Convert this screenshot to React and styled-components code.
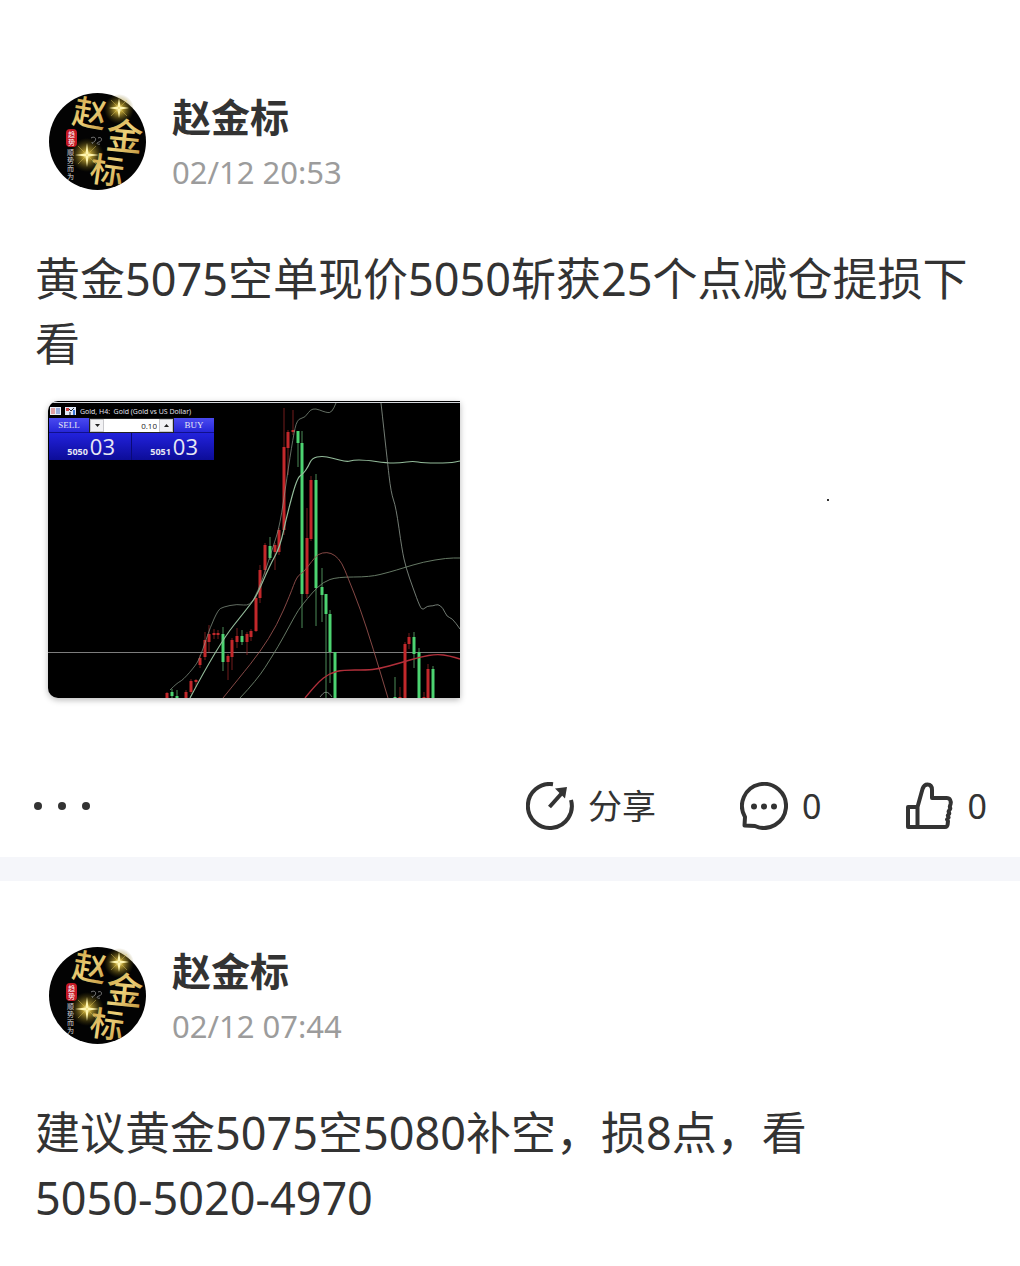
import React from 'react'
import styled, { createGlobalStyle } from 'styled-components';

const GlobalStyle = createGlobalStyle`
  * {
    box-sizing: border-box;
  }
  body {
    margin: 0;
    background: #fff;
    color: #333;
    font-family: "Noto Sans", "Noto Sans CJK SC", sans-serif;
  }
  button, input {
    font: inherit;
    color: inherit;
    border: 0;
    padding: 0;
    margin: 0;
    background: none;
  }
`

const Feed = styled.main`
  padding-top: 27px;
`

const Post = styled.article`
  padding: 66px 33px 27px 35px;

  & + & {
    border-top: 24px solid #f5f6fa;
  }
`

const Header = styled.header`
  display: flex;
  gap: 25px;
  padding-left: 14px;
`

const AvatarImage = styled.svg`
  flex: none;
  width: 98px;
  height: 98px;
  overflow: visible;
  font-family: "Noto Sans CJK SC", sans-serif;
`

const Author = styled.h2`
  margin: 0 0 8px;
  font-family: "Noto Sans CJK SC", sans-serif;
  font-size: 39px;
  line-height: 44px;
  font-weight: 700;
`

const PostTime = styled.time`
  display: block;
  font-size: 31px;
  line-height: 54px;
  color: #9c9c9c;
`

const Body = styled.p`
  margin: 47px 0 0;
  font-size: 45px;
  line-height: 65px;
  white-space: pre-line;
`

const Media = styled.div`
  display: flex;
  align-items: center;
  margin: 25px 0 0 13px;
`

const Shot = styled.div`
  position: relative;
  flex: none;
  width: 412px;
  height: 297px;
  overflow: hidden;
  border-radius: 10px 0 0 10px;
  background: #000;
  box-shadow: 0 2px 6px rgba(0, 0, 0, 0.28);
  color: #e8e8f4;
  font-family: "Open Sans", sans-serif;
`

const Speck = styled.span`
  width: 2px;
  height: 2px;
  margin: 0 0 100px 367px;
  background: #333;
`

const ChartCanvas = styled.svg`
  display: block;
  width: 100%;
  height: 100%;
`

const Overlay = styled.div`
  position: absolute;
  top: 3px;
  left: 1px;
  width: 165px;
`

const ChartTitle = styled.div`
  display: flex;
  align-items: center;
  gap: 4px;
  height: 14px;
  padding-left: 1px;
  font-size: 7px;
  white-space: pre;
`

const TradePanel = styled.div`
  display: grid;
  grid-template-columns: 40px minmax(0, 1fr) 40px;
  background: #1717c4;
`

const TradeButton = styled.button`
  height: 15px;
  border-bottom: 1px solid #10108c;
  background: linear-gradient(#4a4af0, #2626d8);
  font-family: "Liberation Serif", serif;
  font-size: 9px;
  line-height: 14px;
`

const Lots = styled.div`
  display: flex;
  height: 15px;
  border: 1px solid #222;
  background: #fff;
  color: #222;
`

const LotsInput = styled.input`
  flex: 1;
  width: 0;
  min-width: 0;
  padding-right: 2px;
  text-align: right;
  font-size: 8px;
  line-height: 13px;
`

const Step = styled.button`
  display: flex;
  align-items: center;
  justify-content: center;
  width: 14px;
  border: 1px solid #c8c8cc;
  background: #f2f2f4;
`

const Quotes = styled.div`
  grid-column: 1 / -1;
  display: grid;
  grid-template-columns: 1fr 1fr;
  gap: 1px;
  background: #0a0a78;
`

const Quote = styled.div`
  display: flex;
  align-items: baseline;
  justify-content: flex-end;
  gap: 2px;
  height: 27px;
  padding-right: 16px;
  background: linear-gradient(#2222dc, #0c0c98);
  font-size: 22px;
  line-height: 26px;

  b {
    font-size: 9px;
  }
`

const Actions = styled.footer`
  display: flex;
  align-items: center;
  gap: 84px;
  margin-top: 84px;
`

const MoreButton = styled.button`
  display: flex;
  gap: 16px;
  margin: 0 auto 0 -1px;
  padding: 8px 0;
`

const Dot = styled.span`
  width: 8px;
  height: 8px;
  border-radius: 50%;
  background: #333;
`

const Action = styled.button`
  display: flex;
  align-items: center;
  gap: 14px;
  height: 48px;
  font-size: 34px;
  line-height: 48px;
`

const Icon = styled.svg`
  width: 48px;
  height: 48px;
  fill: none;
  stroke: #333;
  stroke-width: 4;
  stroke-linejoin: round;
`

const posts = [
  {
    id: 1,
    time: '02/12 20:53',
    text: '黄金5075空单现价5050斩获25个点减仓提损下看',
    chart: true,
  },
  {
    id: 2,
    time: '02/12 07:44',
    text: '建议黄金5075空5080补空，损8点，看\n5050-5020-4970',
  },
]

// [x, open/close top, open/close bottom, high, low]
const up = [
  [119, 292, 297, 291, 297], [138, 291, 297, 289, 297], [143, 280, 291, 278, 293],
  [148, 279, 281, 278, 286], [152, 257, 264, 254, 267], [157, 239, 256, 231, 259],
  [161, 233, 241, 224, 251], [166, 232, 234, 228, 238], [170, 232, 234, 229, 238],
  [180, 255, 261, 253, 279], [184, 239, 256, 237, 269], [189, 235, 241, 227, 247],
  [199, 233, 241, 231, 254], [203, 230, 236, 228, 240], [208, 197, 230, 195, 231],
  [212, 169, 197, 164, 202], [217, 144, 169, 142, 174], [227, 144, 151, 142, 169],
  [231, 129, 151, 127, 154], [236, 46, 129, 7, 134], [240, 31, 47, 29, 74],
  [245, 29, 31, 9, 34], [259, 137, 193, 107, 197], [263, 79, 138, 75, 140],
  [352, 296, 297, 286, 297], [357, 243, 297, 241, 297], [361, 236, 243, 232, 248],
  [376, 296, 297, 291, 297], [380, 268, 297, 263, 297],
]

const down = [
  [124, 291, 295, 288, 297], [129, 295, 297, 289, 297], [175, 233, 261, 226, 270],
  [194, 235, 241, 229, 244], [222, 145, 157, 136, 159], [250, 30, 42, 30, 66],
  [254, 42, 193, 30, 227], [268, 79, 187, 73, 225], [274, 186, 194, 167, 221],
  [278, 193, 213, 193, 297], [282, 213, 251, 209, 282], [287, 251, 297, 251, 297],
  [347, 296, 297, 276, 297], [366, 236, 253, 231, 267], [371, 251, 297, 247, 297],
  [385, 268, 297, 265, 297],
]

const lines = [
  { color: '#8d9c8d', width: 0.7, points: [[122, 289], [129, 282], [135, 279], [148, 264], [152, 256], [157, 242], [162, 227], [170, 209], [175, 206], [189, 203], [202, 205], [210, 190], [218, 168], [225, 146], [232, 124], [239, 76], [245, 37], [249, 18], [257, 17], [264, 6], [279, 12], [284, 11], [288, 2]] },
  { color: '#93bb9a', width: 1.2, points: [[142, 297], [170, 244], [202, 204], [209, 194], [222, 164], [232, 146], [239, 114], [249, 77], [255, 73], [260, 66], [264, 57], [274, 55], [284, 57], [299, 61], [305, 59], [317, 59], [339, 62], [352, 62], [365, 60], [375, 62], [402, 62], [412, 60]] },
  { color: '#8f9a90', width: 0.8, points: [[333, 2], [339, 57], [343, 92], [348, 106], [354, 149], [358, 167], [365, 187], [372, 206], [375, 209], [379, 205], [385, 205], [390, 203], [395, 207], [399, 216], [404, 217], [412, 228]] },
  { color: '#71866f', width: 0.9, points: [[192, 297], [209, 279], [225, 254], [235, 237], [249, 211], [255, 203], [264, 192], [275, 181], [289, 176], [322, 176], [342, 171], [355, 167], [375, 161], [399, 157], [412, 157]] },
  { color: '#94504d', width: 0.9, points: [[175, 297], [192, 276], [212, 251], [229, 224], [242, 194], [249, 175], [255, 172], [264, 160], [270, 153], [279, 151], [287, 154], [294, 162], [300, 177], [312, 207], [325, 247], [340, 297]] },
  { color: '#b02f3a', width: 1.4, points: [[257, 297], [269, 282], [282, 272], [295, 269], [319, 269], [330, 268], [352, 262], [372, 256], [389, 253], [402, 255], [412, 258]] },
  { color: '#8f9a90', width: 0.8, points: [[272, 296], [275, 292], [278, 291], [281, 292], [284, 296]] },
]

// rounds the corners by running a quadratic curve through each midpoint
const smooth = (points) => {
  let d = `M${points[0]}`
  for (let i = 1; i < points.length - 1; i++) {
    const [x, y] = points[i]
    const [nx, ny] = points[i + 1]
    d += ` Q${x} ${y} ${(x + nx) / 2} ${(y + ny) / 2}`
  }
  return `${d} L${points[points.length - 1]}`
}

const Candles = ({ data, color, wick }) => (
  <g>
    {data.map(([x, top, bottom, high, low]) => (
      <g key={x}>
        <path d={`M${x} ${high}V${low}`} stroke={wick} strokeWidth="0.8" />
        <rect x={x - 1.5} y={top} width="3" height={bottom - top} fill={color} />
      </g>
    ))}
  </g>
)

const Chart = () => (
  <Shot>
    <ChartCanvas viewBox="0 0 412 297" role="img" aria-label="Gold H4">
      <path d="M4 1.5H412" stroke="#d5d8dc" strokeWidth="1" />
      <path d="M0 251.5H412" stroke="#7d7d7d" strokeWidth="1" />
      <Candles data={up} color="#c3282b" wick="#8f2424" />
      <Candles data={down} color="#4cd471" wick="#5fae70" />
      {lines.map((line, i) => (
        <path key={i} d={smooth(line.points)} fill="none" stroke={line.color} strokeWidth={line.width} />
      ))}
    </ChartCanvas>
    <Overlay>
      <ChartTitle>
        <svg width="11" height="8" viewBox="0 0 11 8">
          <path d="M0 0h11v8H0z" fill="#e9eef8" />
          <path d="M1 2h4M1 4h4M1 6h4" stroke="#d25050" />
          <path d="M6 2h4M6 4h4M6 6h4" stroke="#4a6fc4" />
        </svg>
        <svg width="11" height="8" viewBox="0 0 11 8">
          <path d="M0 0h11v8H0z" fill="#dfe8f8" />
          <path d="M1 1h3v3H1z" fill="#d24040" />
          <path d="M4 2l2 2 3-3M5 5v3" stroke="#20242c" fill="none" />
          <path d="M8 3h2v5H8z" fill="#3c78d8" />
        </svg>
        <span>{'Gold, H4:  Gold (Gold vs US Dollar)'}</span>
      </ChartTitle>
      <TradePanel>
        <TradeButton>SELL</TradeButton>
        <Lots>
          <Step aria-label="减少手数">
            <svg width="5" height="3"><path d="M0 0h5L2.5 3z" fill="#222" /></svg>
          </Step>
          <LotsInput aria-label="手数" defaultValue="0.10" />
          <Step aria-label="增加手数">
            <svg width="5" height="3"><path d="M0 3h5L2.5 0z" fill="#222" /></svg>
          </Step>
        </Lots>
        <TradeButton>BUY</TradeButton>
        <Quotes>
          <Quote><b>5050</b>03</Quote>
          <Quote><b>5051</b>03</Quote>
        </Quotes>
      </TradePanel>
    </Overlay>
  </Shot>
)

const Avatar = () => (
  <AvatarImage viewBox="0 0 98 98" role="img" aria-label="赵金标">
    <defs>
      <linearGradient id="gold" x1="0" y1="0" x2="1" y2="1">
        <stop offset="0" stopColor="#c2922f" />
        <stop offset="0.5" stopColor="#ecd17a" />
        <stop offset="1" stopColor="#bd8c34" />
      </linearGradient>
      <radialGradient id="glow">
        <stop offset="0" stopColor="#fffbd0" />
        <stop offset="0.25" stopColor="#e0c040" stopOpacity="0.8" />
        <stop offset="1" stopColor="#6b5a08" stopOpacity="0" />
      </radialGradient>
    </defs>
    <circle cx="48.5" cy="48.5" r="48.5" fill="#030303" />
    <circle cx="70" cy="16" r="15" fill="url(#glow)" />
    <circle cx="38" cy="62" r="17" fill="url(#glow)" />
    <g fill="url(#gold)" fontWeight="500">
      <text x="24" y="33" fontSize="34" transform="rotate(10 41 20)">赵</text>
      <text x="57" y="57" fontSize="37" transform="rotate(6 75 43)">金</text>
      <text x="41" y="90" fontSize="34" transform="rotate(8 58 78)">标</text>
    </g>
    <g fill="#fff6b0">
      <path d="M70 5l1.500 8.500L80 15l-8.500 1.500L70 25l-1.500-8.500L60 15l8.500-1.500z" />
      <path d="M38 50l1.500 10.500L50 62l-10.500 1.500L38 74l-1.500-10.500L26 62l10.500-1.500z" />
    </g>
    <g stroke="#e8d060" strokeWidth="0.6" opacity="0.7">
      <path d="M62 7l16 16M78 7l-16 16M29 53l18 18M47 53l-18 18" />
    </g>
    <rect x="17" y="36" width="11" height="18" rx="4" fill="#c41824" />
    <g fill="#fff" fontSize="7">
      <text x="19" y="44">趋</text>
      <text x="19" y="52">势</text>
    </g>
    <g fill="#d6d6d6" fontSize="7">
      <text x="18" y="62">顺</text>
      <text x="18" y="70">势</text>
      <text x="18" y="78">而</text>
      <text x="18" y="86">为</text>
    </g>
    <path d="M42 45c3-2 6 0 4 3s-5 0-2 3M49 45c4-2 5 3 1 4s-1 3 1 2" fill="none" stroke="#777" />
  </AvatarImage>
)

const ShareIcon = () => (
  <Icon viewBox="0 0 48 48" aria-hidden="true">
    <path d="M45 18A22 22 0 1 1 27 2.200" />
    <path d="M23.500 25L36 11" />
    <path d="M29 6.500L41 5L39 16.500z" fill="#333" stroke="none" />
  </Icon>
)

const CommentIcon = () => (
  <Icon viewBox="0 0 48 48" aria-hidden="true">
    <path d="M5 35A22 22 0 1 1 15 44L4.500 43.500z" />
    <g fill="#333" stroke="none">
      <circle cx="14" cy="24.500" r="3" />
      <circle cx="24" cy="24.500" r="3" />
      <circle cx="34" cy="24.500" r="3" />
    </g>
  </Icon>
)

const LikeIcon = () => (
  <Icon viewBox="0 0 48 48" aria-hidden="true">
    <path d="M11.500 25H2V45H39c2 0 2.500-1 2.700-3l.3-3 -1-1.500 1.600-2 -.8-2 1.500-2 -.7-2 1.700-3 -.5-2 .8-2.500c.6-3-.5-6-4-6H26V8c0-3.500-1.500-5.500-4.500-5.500S17.500 4 16.500 7L11.500 25V45" />
  </Icon>
)

const PostCard = ({ post }) => (
  <Post>
    <Header>
      <Avatar />
      <div>
        <Author>赵金标</Author>
        <PostTime>{post.time}</PostTime>
      </div>
    </Header>
    <Body>{post.text}</Body>
    {post.chart && (
      <>
        <Media>
          <Chart />
          <Speck />
        </Media>
        <Actions>
          <MoreButton aria-label="更多">
            <Dot />
            <Dot />
            <Dot />
          </MoreButton>
          <Action><ShareIcon />分享</Action>
          <Action aria-label="评论"><CommentIcon />0</Action>
          <Action aria-label="点赞"><LikeIcon />0</Action>
        </Actions>
      </>
    )}
  </Post>
)

const App = () => (
  <>
    <GlobalStyle />
    <Feed>
      {posts.map((post) => (
        <PostCard key={post.id} post={post} />
      ))}
    </Feed>
  </>
)

export default App
